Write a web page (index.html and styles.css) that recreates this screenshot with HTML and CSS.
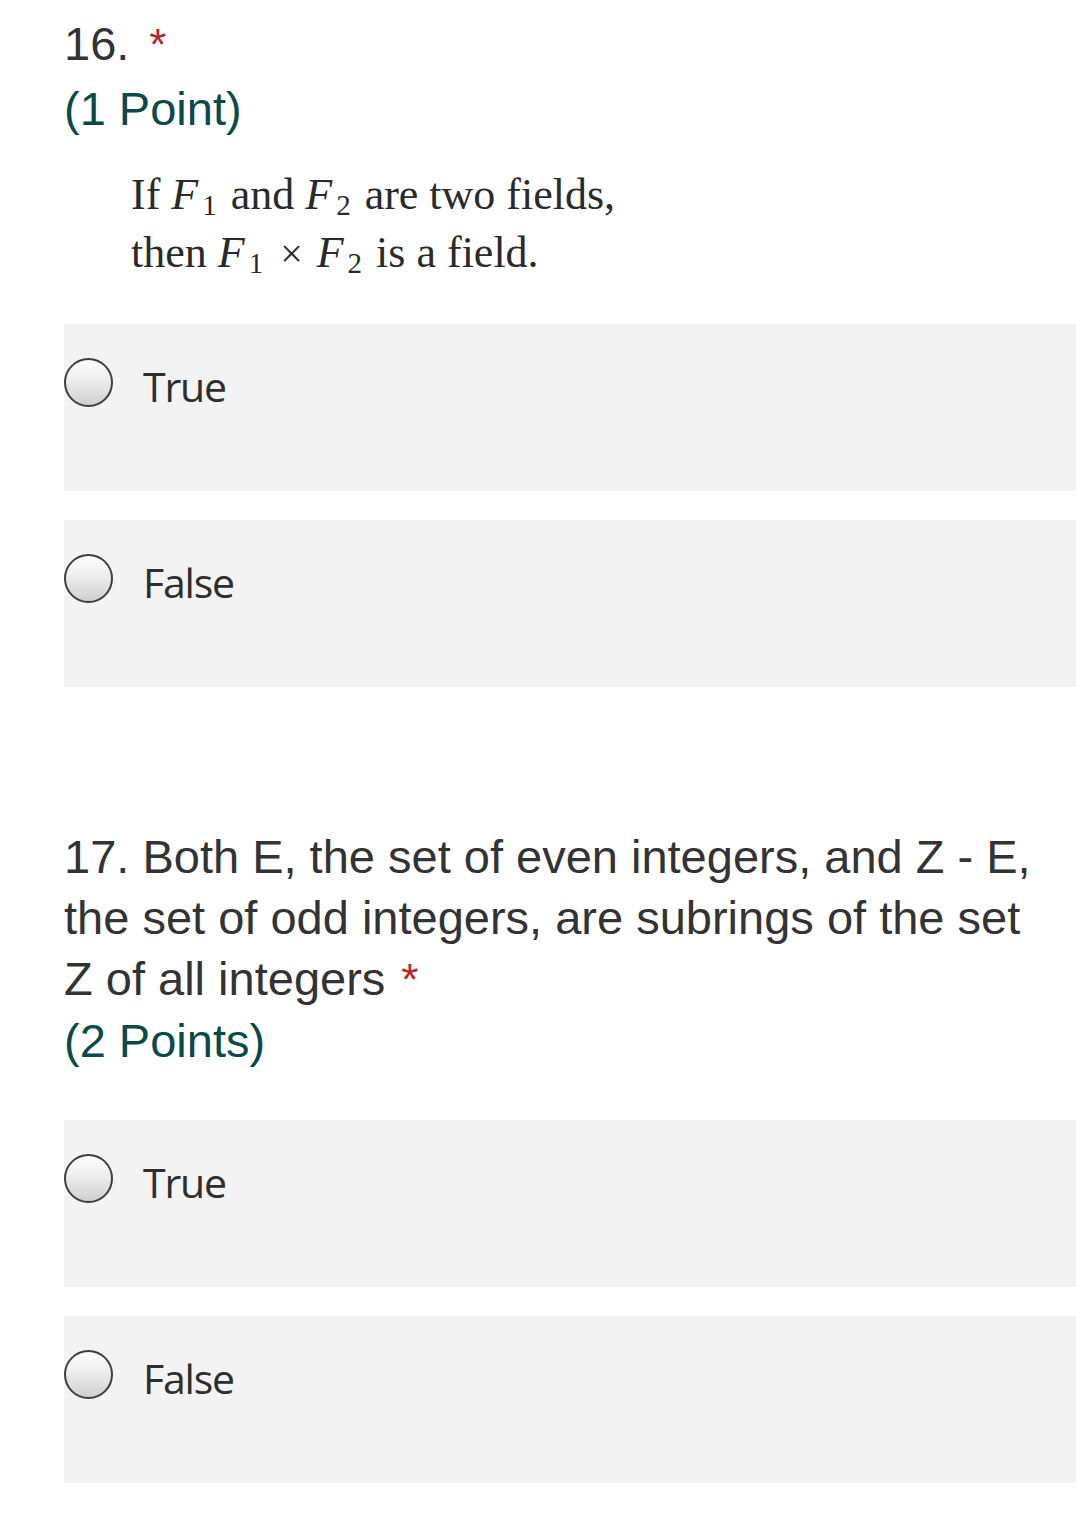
FILE: index.html
```html
<!DOCTYPE html>
<html lang="en">
<head>
<meta charset="utf-8">
<title>Quiz</title>
<link rel="stylesheet" href="styles.css">
</head>
<body>
<div class="page">
  <section class="question q16">
    <div class="q-title"><span class="num">16.</span><span class="req">*</span></div>
    <div class="points">(1 Point)</div>
    <div class="math">
      <div class="math-line">If <i>F</i><span class="sub">1</span> and <i>F</i><span class="sub">2</span> are two fields,</div>
      <div class="math-line">then <i>F</i><span class="sub">1</span> <span class="times">×</span> <i>F</i><span class="sub">2</span> is a field.</div>
    </div>
    <div class="options">
      <label class="option"><span class="radio"></span><span class="opt-text">True</span></label>
      <label class="option"><span class="radio"></span><span class="opt-text">False</span></label>
    </div>
  </section>

  <section class="question q17">
    <div class="q-title">17. Both E, the set of even integers, and Z - E, the set of odd integers, are subrings of the set Z of all integers<span class="req req-inline">*</span></div>
    <div class="points">(2 Points)</div>
    <div class="options">
      <label class="option"><span class="radio"></span><span class="opt-text">True</span></label>
      <label class="option"><span class="radio"></span><span class="opt-text">False</span></label>
    </div>
  </section>
</div>
</body>
</html>
```
FILE: styles.css
```css
html, body {
  margin: 0;
  padding: 0;
  background: #ffffff;
}

.page {
  padding-left: 64px;
  font-family: "Liberation Sans", Arial, sans-serif;
  color: #333333;
}

.question {
  display: flex;
  flex-direction: column;
}

.q16 {
  padding-top: 13px;
}

.q17 {
  padding-top: 139px;
}

.q17 .q-title {
  padding-right: 36px;
}

.q-title {
  font-size: 47px;
  line-height: 61px;
  color: #333333;
}

.req {
  color: #b4262a;
  margin-left: 20px;
  font-size: 44px;
}

.req-inline {
  margin-left: 16px;
}

.points {
  font-size: 47px;
  line-height: 61px;
  color: #0c4a47;
  margin-top: 3px;
}

.q17 .points {
  margin-top: 0;
}

.math {
  margin-top: 27px;
  padding-left: 67px;
  font-family: "Liberation Serif", "Times New Roman", serif;
  font-size: 44px;
  line-height: 58px;
  color: #2a2a2a;
}

.math i {
  font-style: italic;
}

.sub {
  font-size: 29px;
  line-height: 1;
  vertical-align: -6px;
  margin-left: 4px;
  margin-right: 3px;
}

.times {
  font-size: 40px;
  line-height: 1;
  margin: 0 3px;
}

.options {
  display: flex;
  flex-direction: column;
  gap: 29px;
  margin-top: 42px;
}

.q17 .options {
  margin-top: 49px;
}

.option {
  display: flex;
  align-items: flex-start;
  height: 167px;
  box-sizing: border-box;
  padding-top: 34px;
  background: #f3f3f3;
}

.radio {
  width: 49px;
  height: 49px;
  box-sizing: border-box;
  border-radius: 50%;
  border: 2.5px solid #3f3f3f;
  background: linear-gradient(to bottom, #ffffff 0%, #ededed 45%, #cfcfcf 100%);
  flex: none;
}

.opt-text {
  margin-left: 30px;
  margin-top: 4px;
  font-family: "Open Sans", "Noto Sans", sans-serif;
  font-size: 41px;
  line-height: 48px;
  letter-spacing: -1.2px;
  color: #2e2e2e;
}
```
